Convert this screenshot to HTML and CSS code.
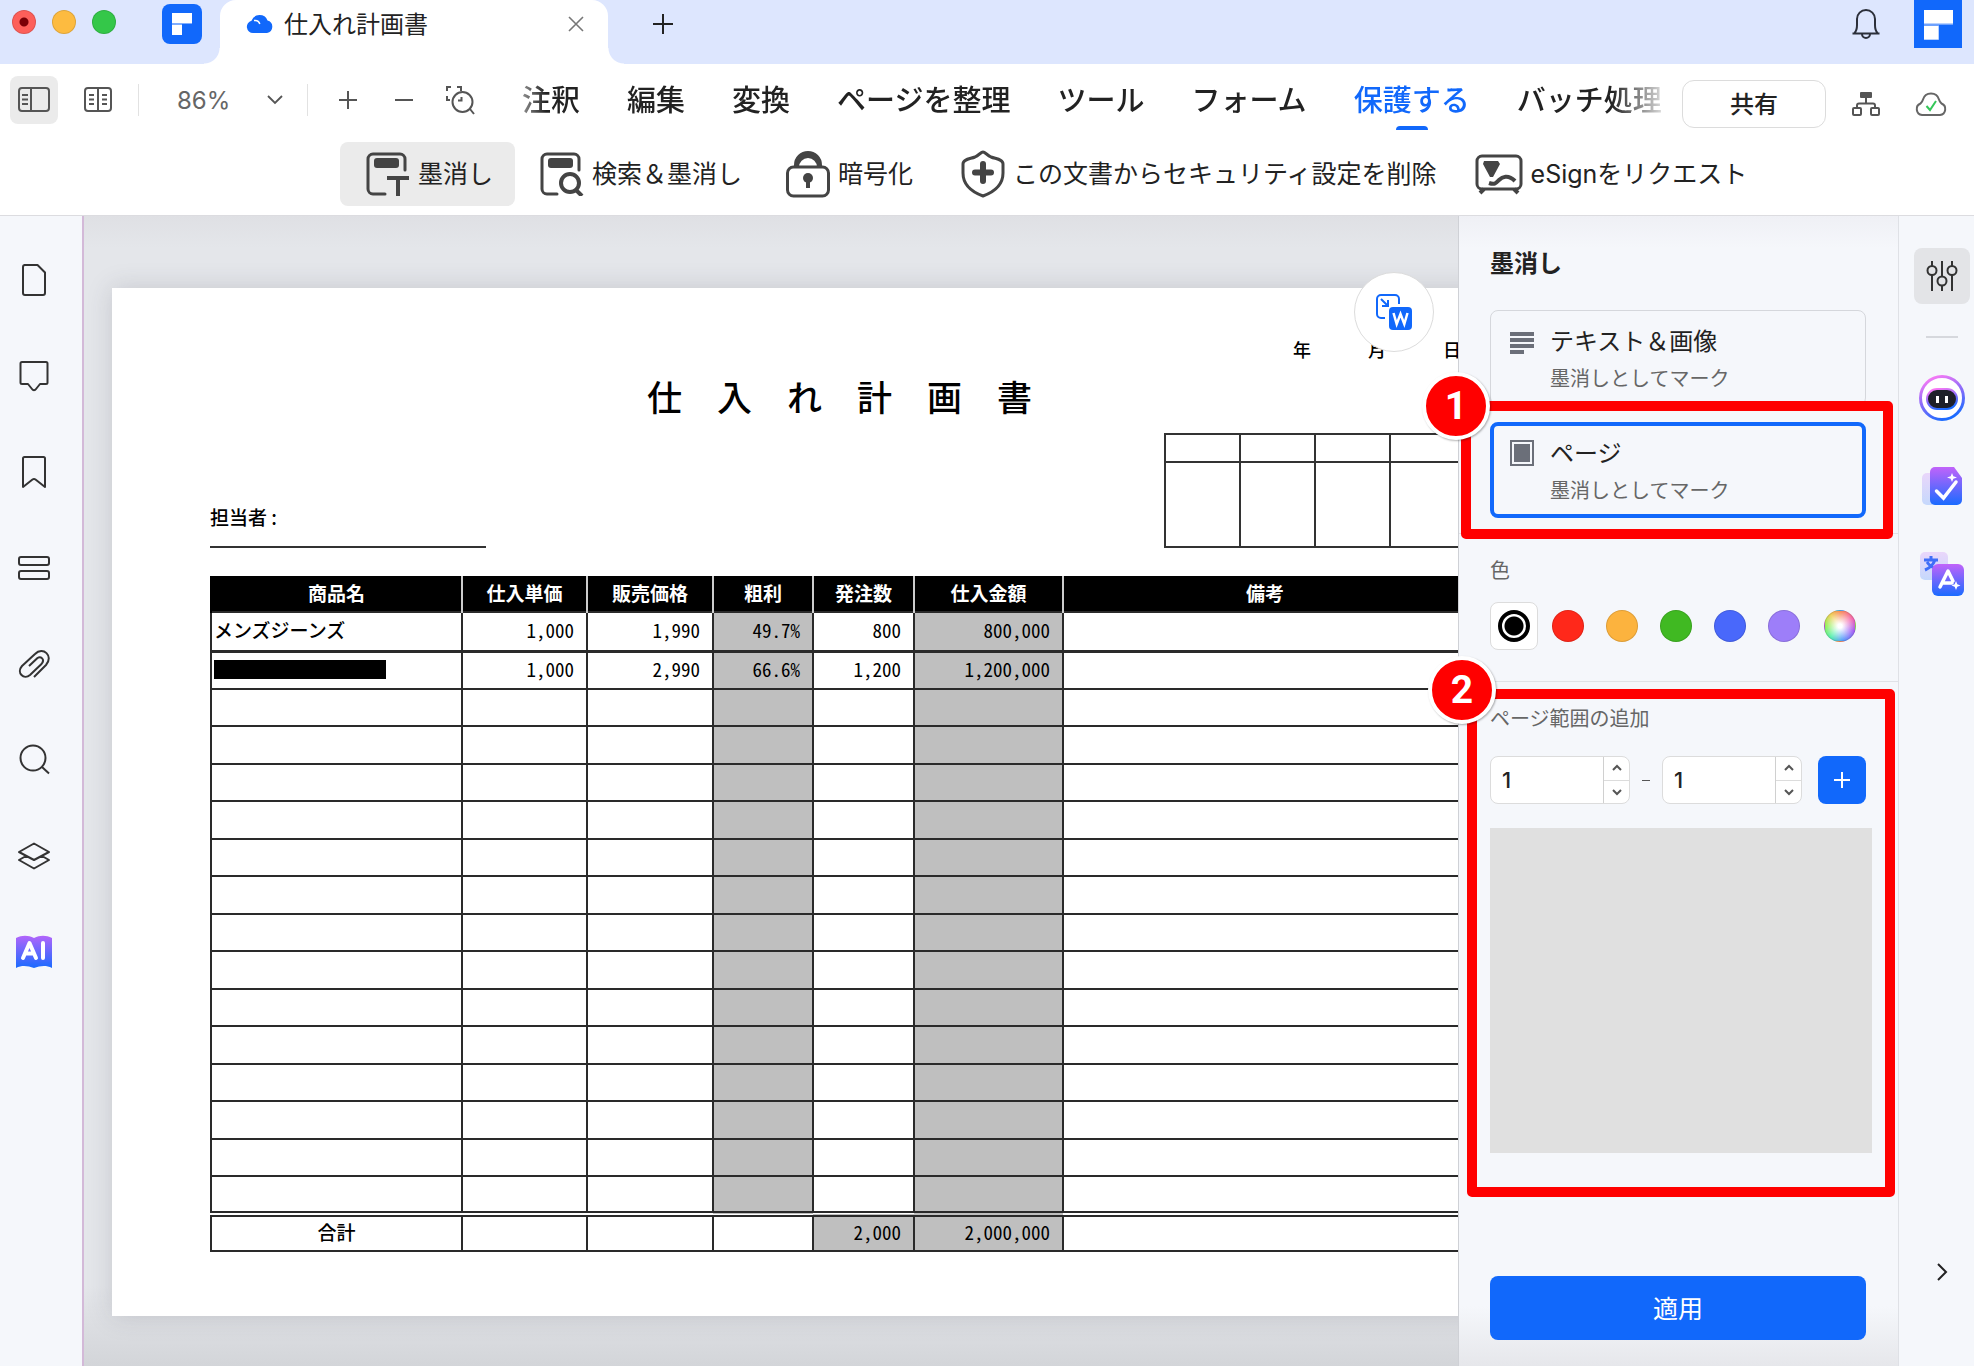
FILE: index.html
```html
<!DOCTYPE html>
<html lang="ja">
<head>
<meta charset="utf-8">
<title>仕入れ計画書</title>
<link rel="stylesheet" href="styles.css">
</head>
<body>
<div class="app">
  <header class="titlebar">
    <div class="lights">
      <button class="light light-close" aria-label="閉じる"></button>
      <button class="light light-min" aria-label="最小化"></button>
      <button class="light light-max" aria-label="最大化"></button>
    </div>
    <a class="home" href="#" aria-label="ホーム">
      <svg width="40" height="40" viewBox="0 0 40 40"><rect width="40" height="40" rx="8" fill="#1168fb"/><path d="M10 9h20v11H20v11H10z" fill="#7fadfd"/><path d="M10 9h20v10H10zM10 21h10v10H10z" fill="#fff"/></svg>
    </a>
    <div class="doc-tab">
      <svg width="28" height="20" viewBox="0 0 28 20"><path d="M7 19a6.200 6.200 0 0 1-1.500-12.200A8.500 8.500 0 0 1 21.500 6.500 6.400 6.400 0 0 1 21 19z" fill="#1168fb"/><path d="M8 6.500c3-.5 5 .8 5.800 3.500" fill="none" stroke="#fff" stroke-width="1.500"/></svg>
      <span class="doc-name">仕入れ計画書</span>
      <button class="icon-btn" aria-label="タブを閉じる"><svg width="16" height="16" viewBox="0 0 16 16" fill="none" stroke="#777" stroke-width="1.600"><path d="M1 1l14 14M15 1L1 15"/></svg></button>
    </div>
    <button class="icon-btn new-tab" aria-label="新しいタブ"><svg width="22" height="22" viewBox="0 0 22 22" fill="none" stroke="#222" stroke-width="2"><path d="M11 1v20M1 11h20"/></svg></button>
    <button class="icon-btn bell" aria-label="通知"><svg width="30" height="32" viewBox="0 0 30 32" fill="none" stroke="#2b2f3a" stroke-width="2"><path d="M1.500 26.500h27M3.500 26c2-2 2.500-5 2.500-8v-6a9 9 0 0 1 18 0v6c0 3 .5 6 2.500 8M11 27a4 4 0 0 0 8 0"/></svg></button>
    <a class="account" href="#" aria-label="アカウント"><svg width="48" height="48" viewBox="0 0 48 48"><rect width="48" height="48" fill="#1168fb"/><path d="M10 10h29v15H25v15H10z" fill="#6fa2fd"/><path d="M10 10h29v13.500H10zM10 26h14.500v13.500H10z" fill="#fff"/></svg></a>
  </header>

  <div class="toolbar">
    <button class="tool tool-on" aria-label="サイドバー"><svg width="32" height="26" viewBox="0 0 32 26" fill="none" stroke="#555" stroke-width="2"><rect x="1" y="1" width="30" height="23" rx="3"/><path d="M13 1v23M4 8h6M4 12.500h6M4 17h6"/></svg></button>
    <button class="tool" aria-label="見開き"><svg width="28" height="26" viewBox="0 0 28 26" fill="none" stroke="#555" stroke-width="2"><rect x="1" y="1" width="26" height="23" rx="3"/><path d="M14 1v23M5 8h5M5 12.500h5M5 17h5M18 8h5M18 12.500h5M18 17h5"/></svg></button>
    <span class="sep"></span>
    <div class="zoom">
      <select class="zoom-select" aria-label="ズーム"><option>86%</option><option>100%</option></select>
      <svg width="16" height="10" viewBox="0 0 16 10" fill="none" stroke="#555" stroke-width="1.800"><path d="M1 1l7 7 7-7"/></svg>
    </div>
    <span class="sep"></span>
    <button class="tool tool-plus" aria-label="拡大"><svg width="18" height="18" viewBox="0 0 18 18" stroke="#555" stroke-width="2"><path d="M9 0v18M0 9h18"/></svg></button>
    <button class="tool" aria-label="縮小"><svg width="18" height="18" viewBox="0 0 18 18" stroke="#555" stroke-width="2"><path d="M0 9h18"/></svg></button>
    <button class="tool" aria-label="範囲ズーム"><svg width="30" height="30" viewBox="0 0 30 30" fill="none" stroke="#555" stroke-width="2"><path d="M2 6V2h4M12 2h4v4M2 11v4h3"/><circle cx="17.500" cy="17" r="10"/><path d="M25 24l4 5M13 15.500h3.500V12"/></svg></button>
    <nav class="menu">
      <a href="#">注釈</a><a href="#">編集</a><a href="#">変換</a><a href="#">ページを整理</a><a href="#">ツール</a><a href="#">フォーム</a><a href="#" class="menu-on">保護する</a><a href="#">バッチ処理</a>
    </nav>
    <button class="share">共有</button>
    <button class="tool tool-tree" aria-label="構成"><svg width="30" height="26" viewBox="0 0 30 26" fill="none" stroke="#555" stroke-width="2"><rect x="9" y="1" width="12" height="6" rx="1" fill="#555" stroke="none"/><path d="M15 6v6M6 17v-2.500a2 2 0 0 1 2-2h14a2 2 0 0 1 2 2V17"/><rect x="2" y="17" width="8" height="7" rx="1"/><rect x="20" y="17" width="8" height="7" rx="1"/></svg></button>
    <button class="tool tool-cloud" aria-label="クラウド保存"><svg width="32" height="26" viewBox="0 0 32 26" fill="none" stroke="#666" stroke-width="2"><path d="M7 24a6 6 0 0 1-1.500-11.500c1-1 2-2 2.500-4a8.300 8.300 0 0 1 16 0c.5 2 1.500 3 2.500 4A6 6 0 0 1 25 24z"/><path d="M11.500 15l3.500 4 6-9" stroke="#34c759"/></svg></button>
  </div>

  <div class="ribbon">
    <button class="rib rib-on"><svg width="44" height="44" viewBox="0 0 44 44" fill="none" stroke="#444" stroke-width="3"><path d="M19 42H7a5 5 0 0 1-5-5V7a5 5 0 0 1 5-5h27a5 5 0 0 1 5 5v11" stroke-linecap="round"/><rect x="8" y="6" width="25" height="10" rx="3" fill="#444" stroke="none"/><path d="M21 26h22M32 26v18" stroke-width="4"/></svg>墨消し</button>
    <button class="rib"><svg width="44" height="44" viewBox="0 0 44 44" fill="none" stroke="#444" stroke-width="3"><path d="M17 42H7a5 5 0 0 1-5-5V7a5 5 0 0 1 5-5h27a5 5 0 0 1 5 5v11" stroke-linecap="round"/><rect x="8" y="6" width="25" height="10" rx="3" fill="#444" stroke="none"/><circle cx="30" cy="31" r="9" stroke-width="4"/><path d="M36 38l6 6" stroke-width="4"/></svg>検索＆墨消し</button>
    <button class="rib"><svg width="44" height="48" viewBox="0 0 44 48" fill="none" stroke="#444" stroke-width="3"><path d="M8 17v-2a14 14 0 0 1 28 0v2h-5a9 9 0 0 0-18 0z" fill="#444" stroke="none"/><rect x="1.500" y="17" width="41" height="29" rx="6"/><circle cx="22" cy="28" r="5" fill="#444" stroke="none"/><path d="M22 28v10" stroke-width="4"/></svg>暗号化</button>
    <button class="rib"><svg width="44" height="48" viewBox="0 0 44 48" fill="none" stroke="#444" stroke-width="3"><path d="M22 2c2 0 4 3 8 5 5 2 12 2 12 7v9c0 12-9 19-20 23C11 42 2 35 2 23v-9c0-5 7-5 12-7 4-2 6-5 8-5z"/><path d="M22 14v17M14 22.500h16" stroke-width="6" stroke-linecap="round"/></svg>この文書からセキュリティ設定を削除</button>
    <button class="rib"><svg width="48" height="42" viewBox="0 0 48 42" fill="none" stroke="#444" stroke-width="4"><rect x="2" y="3" width="44" height="33" rx="5" stroke-width="3"/><path d="M9 36l-4 4M39 36l4 4"/><path d="M9 8h14l2 3-7 13h-3L8 11z" fill="#444" stroke="none"/><path d="M14 30c6 2 7 0 10-3s9-6 16 1"/></svg>eSignをリクエスト</button>
  </div>

  <main class="work">
    <aside class="rail">
      <button class="rail-btn" aria-label="ページ"><svg width="36" height="36" viewBox="0 0 36 36"><path d="M8 3h13.500L29 10.500V31a2 2 0 0 1-2 2H9a2 2 0 0 1-2-2V5a2 2 0 0 1 2-2"/></svg></button>
      <button class="rail-btn" aria-label="コメント"><svg width="36" height="36" viewBox="0 0 36 36"><path d="M6 4h24a1.500 1.500 0 0 1 1.500 1.500v19A1.500 1.500 0 0 1 30 26h-6l-4 5c-1 1.500-3 1.500-4 0l-4-5H6a1.500 1.500 0 0 1-1.500-1.500v-19A1.500 1.500 0 0 1 6 4z"/></svg></button>
      <button class="rail-btn" aria-label="ブックマーク"><svg width="36" height="36" viewBox="0 0 36 36"><path d="M7 33V4.500A1.500 1.500 0 0 1 8.500 3h19A1.500 1.500 0 0 1 29 4.500V33l-9.500-7.500a2.500 2.500 0 0 0-3 0z"/></svg></button>
      <button class="rail-btn" aria-label="フィールド"><svg width="36" height="36" viewBox="0 0 36 36"><rect x="3" y="7" width="30" height="8" rx="2"/><rect x="3" y="21" width="30" height="8" rx="2"/></svg></button>
      <button class="rail-btn" aria-label="添付"><svg width="36" height="36" viewBox="0 0 36 36"><path d="M18 31L30 19c8-9-3-19-11-11L6 20c-6 7 2 14 8 9L25.500 18c4-5-1-8-4-6L13 20"/></svg></button>
      <button class="rail-btn" aria-label="検索"><svg width="36" height="36" viewBox="0 0 36 36"><circle cx="17" cy="16" r="12.500"/><path d="M26 25l7 6.500"/></svg></button>
      <button class="rail-btn" aria-label="レイヤー"><svg width="36" height="36" viewBox="0 0 36 36"><path d="M3 14l15-8.500L33 14l-15 8zM10 18l-7 4 15 8.500L33 22l-7-4"/></svg></button>
      <button class="rail-btn" aria-label="AI"><svg width="36" height="36" viewBox="0 0 36 36"><defs><linearGradient id="ai" x1="0" y1="0" x2="0" y2="1"><stop offset="0" stop-color="#b265fb"/><stop offset="1" stop-color="#1a6bff"/></linearGradient></defs><path d="M0 4c6-3 12-3 18 0 6-3 12-3 18 0v30c-6-3-12-2-18 0-6-2-12-3-18 0z" fill="url(#ai)" stroke="none"/><path d="M7 24L13.500 9 20 24M9.500 19.500h8M27 9v15" stroke="#fff" stroke-width="4" stroke-linecap="round" stroke-linejoin="round"/></svg></button>
    </aside>

    <section class="canvas">
      <article class="sheet">
        <p class="date"><span>年</span><span>月</span><span>日</span></p>
        <h1 class="sheet-title">仕　入　れ　計　画　書</h1>
        <div class="sheet-head">
          <p class="person">担当者 :</p>
          <table class="stamps" aria-label="押印欄"><tr><td></td><td></td><td></td><td></td></tr><tr><td></td><td></td><td></td><td></td></tr></table>
        </div>
        <table class="plan">
          <colgroup><col class="c-name"><col class="c-cost"><col class="c-price"><col class="c-rate"><col class="c-qty"><col class="c-sum"><col class="c-note"></colgroup>
          <thead><tr><th>商品名</th><th>仕入単価</th><th>販売価格</th><th>粗利</th><th>発注数</th><th>仕入金額</th><th>備考</th></tr></thead>
          <tbody>
            <tr class="r-first"><td class="name">メンズジーンズ</td><td>1,000</td><td>1,990</td><td class="g">49.7%</td><td>800</td><td class="g">800,000</td><td></td></tr>
            <tr><td class="name"><div class="redacted"></div></td><td>1,000</td><td>2,990</td><td class="g">66.6%</td><td>1,200</td><td class="g">1,200,000</td><td></td></tr>
            <tr><td></td><td></td><td></td><td class="g"></td><td></td><td class="g"></td><td></td></tr>
            <tr><td></td><td></td><td></td><td class="g"></td><td></td><td class="g"></td><td></td></tr>
            <tr><td></td><td></td><td></td><td class="g"></td><td></td><td class="g"></td><td></td></tr>
            <tr><td></td><td></td><td></td><td class="g"></td><td></td><td class="g"></td><td></td></tr>
            <tr><td></td><td></td><td></td><td class="g"></td><td></td><td class="g"></td><td></td></tr>
            <tr><td></td><td></td><td></td><td class="g"></td><td></td><td class="g"></td><td></td></tr>
            <tr><td></td><td></td><td></td><td class="g"></td><td></td><td class="g"></td><td></td></tr>
            <tr><td></td><td></td><td></td><td class="g"></td><td></td><td class="g"></td><td></td></tr>
            <tr><td></td><td></td><td></td><td class="g"></td><td></td><td class="g"></td><td></td></tr>
            <tr><td></td><td></td><td></td><td class="g"></td><td></td><td class="g"></td><td></td></tr>
            <tr><td></td><td></td><td></td><td class="g"></td><td></td><td class="g"></td><td></td></tr>
            <tr><td></td><td></td><td></td><td class="g"></td><td></td><td class="g"></td><td></td></tr>
            <tr><td></td><td></td><td></td><td class="g"></td><td></td><td class="g"></td><td></td></tr>
            <tr><td></td><td></td><td></td><td class="g"></td><td></td><td class="g"></td><td></td></tr>
          </tbody>
          <tfoot><tr><td class="total">合計</td><td></td><td></td><td></td><td class="g">2,000</td><td class="g">2,000,000</td><td></td></tr></tfoot>
        </table>
      </article>
      <button class="convert" aria-label="Wordに変換"><svg width="38" height="38" viewBox="0 0 38 38" fill="none" stroke="#1168fb" stroke-width="2"><path d="M10 25H6a4 4 0 0 1-4-4V6a4 4 0 0 1 4-4h14a4 4 0 0 1 4 4v5M6 6l7 7M13 7v6H7"/><rect x="14" y="14" width="23" height="23" rx="4" fill="#1168fb" stroke="none"/><path d="M18.500 20l3.200 11 3.800-10 3.800 10 3.200-11" stroke="#fff" stroke-width="2.500"/></svg></button>
    </section>

    <aside class="panel">
      <h2 class="panel-title">墨消し</h2>
      <div class="options">
        <button class="option">
          <svg width="24" height="24" viewBox="0 0 24 24" fill="#6b6f79"><path d="M0 1h24v4H0zM0 7h24v4H0zM0 13h24v4H0zM0 19h14v4H0z"/></svg>
          <span class="option-text"><span class="option-name">テキスト＆画像</span><span class="option-sub">墨消しとしてマーク</span></span>
        </button>
        <button class="option option-on">
          <svg width="24" height="26" viewBox="0 0 24 26" fill="#6b6f79"><rect x="1" y="1" width="22" height="24" fill="none" stroke="#6b6f79" stroke-width="2"/><rect x="4" y="4" width="16" height="18"/></svg>
          <span class="option-text"><span class="option-name">ページ</span><span class="option-sub">墨消しとしてマーク</span></span>
        </button>
      </div>
      <fieldset class="block colors">
        <legend class="block-label">色</legend>
        <div class="swatches">
          <label class="swatch"><input type="radio" name="color" class="dot black" aria-label="黒" checked></label>
          <label class="swatch"><input type="radio" name="color" class="dot red" aria-label="赤"></label>
          <label class="swatch"><input type="radio" name="color" class="dot orange" aria-label="橙"></label>
          <label class="swatch"><input type="radio" name="color" class="dot green" aria-label="緑"></label>
          <label class="swatch"><input type="radio" name="color" class="dot blue" aria-label="青"></label>
          <label class="swatch"><input type="radio" name="color" class="dot purple" aria-label="紫"></label>
          <label class="swatch"><input type="radio" name="color" class="dot wheel" aria-label="その他"></label>
        </div>
      </fieldset>
      <div class="block">
        <label class="block-label" for="from">ページ範囲の追加</label>
        <div class="range">
          <div class="stepper"><input class="step-input" id="from" type="number" value="1"><div class="step-btns"><button class="step" aria-label="増やす"><svg width="12" height="8" viewBox="0 0 12 8"><path d="M2 6l4-4 4 4"/></svg></button><button class="step" aria-label="減らす"><svg width="12" height="8" viewBox="0 0 12 8"><path d="M2 2l4 4 4-4"/></svg></button></div></div>
          <span class="dash"></span>
          <div class="stepper"><input class="step-input" type="number" value="1" aria-label="終了ページ"><div class="step-btns"><button class="step" aria-label="増やす"><svg width="12" height="8" viewBox="0 0 12 8"><path d="M2 6l4-4 4 4"/></svg></button><button class="step" aria-label="減らす"><svg width="12" height="8" viewBox="0 0 12 8"><path d="M2 2l4 4 4-4"/></svg></button></div></div>
          <button class="add" aria-label="追加"><svg width="16" height="16" viewBox="0 0 16 16" stroke="#fff" stroke-width="2"><path d="M8 0v16M0 8h16"/></svg></button>
        </div>
        <div class="range-list"></div>
      </div>
      <button class="apply">適用</button>
      <div class="mark mark-1"></div>
      <div class="mark mark-2"></div>
      <span class="num num-1">1</span>
      <span class="num num-2">2</span>
    </aside>

    <aside class="dock">
      <button class="dock-btn dock-on" aria-label="プロパティ"><svg width="32" height="32" viewBox="0 0 32 32" fill="none" stroke="#333" stroke-width="2"><path d="M6 1v5M6 15v16M16 1v15M16 26v5M26 1v5M26 15v16"/><circle cx="6" cy="10.500" r="4.500"/><circle cx="16" cy="21" r="4.500"/><circle cx="26" cy="10.500" r="4.500"/></svg></button>
      <span class="dock-sep"></span>
      <button class="dock-btn" aria-label="AIアシスタント"><svg width="46" height="46" viewBox="0 0 46 46"><defs><linearGradient id="g1" x1=".2" y1="0" x2=".6" y2="1"><stop offset="0" stop-color="#ff7bf5"/><stop offset=".5" stop-color="#8a6cf9"/><stop offset="1" stop-color="#1a6bff"/></linearGradient></defs><circle cx="23" cy="23" r="21.500" fill="#fff" stroke="url(#g1)" stroke-width="3"/><rect x="8" y="14" width="30" height="20" rx="10" fill="#1e2029" stroke="url(#g1)" stroke-width="2"/><path d="M18.500 21v7M27.500 21v7" stroke="#fff" stroke-width="3"/></svg></button>
      <button class="dock-btn" aria-label="AIチェック"><svg width="42" height="40" viewBox="0 0 42 40"><defs><linearGradient id="g2" x1="0" y1="0" x2="0" y2="1"><stop offset="0" stop-color="#c163fa"/><stop offset="1" stop-color="#1a6bff"/></linearGradient></defs><rect x="1" y="7" width="32" height="32" rx="5" fill="url(#g2)" opacity=".22"/><path d="M14 1h19l8 11v22a5 5 0 0 1-5 5H14a5 5 0 0 1-5-5V6a5 5 0 0 1 5-5z" fill="url(#g2)"/><path d="M15.500 25l7 7L35 16" fill="none" stroke="#fff" stroke-width="3.500" stroke-linecap="round"/><path d="M31 7l1.300 3.200L36 11.500l-3.700 1.300L31 16l-1.300-3.200L26 11.500l3.700-1.300z" fill="#fff"/></svg></button>
      <button class="dock-btn" aria-label="AI翻訳"><svg width="44" height="44" viewBox="0 0 44 44"><rect width="28" height="28" rx="5" fill="url(#g2)" opacity=".22"/><path d="M11 4v3M4 8h14M15 8c-2 5-5 8-10 10M7 10c2 3 4 5 8 6" fill="none" stroke="#3f6ef8" stroke-width="3"/><rect x="12" y="12" width="32" height="32" rx="6" fill="url(#g2)"/><path d="M20 35l8-16 5 10M22 31h10" fill="none" stroke="#fff" stroke-width="3.500" stroke-linecap="round" stroke-linejoin="round"/><path d="M36 29l1.300 3.200 3.200 1.300-3.200 1.300L36 38l-1.300-3.200-3.200-1.300 3.200-1.300z" fill="#fff"/></svg></button>
      <button class="icon-btn collapse" aria-label="折りたたむ"><svg width="12" height="18" viewBox="0 0 12 18" fill="none" stroke="#222" stroke-width="2"><path d="M2 1l8 8-8 8"/></svg></button>
    </aside>
  </main>
</div>
</body>
</html>
```
FILE: styles.css
```css
* { box-sizing: border-box; }
body {
  margin: 0;
  font-family: Inter, "Noto Sans CJK JP", sans-serif;
  color: #222;
  background: #fff;
}
button, input, select { font: inherit; color: inherit; margin: 0; }
button { border: 0; padding: 0; background: none; }
a { color: inherit; text-decoration: none; }
h1, h2, p { margin: 0; }
svg { flex: none; display: block; }

.app { display: flex; flex-direction: column; min-height: 100vh; overflow: hidden; }
.icon-btn { display: flex; align-items: center; justify-content: center; }

/* Title bar */
.titlebar { display: flex; align-items: flex-start; height: 64px; background: #dde6fe; padding-right: 12px; }
.lights { display: flex; gap: 16px; padding: 10px 0 0 12px; }
.light { width: 24px; height: 24px; border-radius: 50%; border: 1px solid rgba(0, 0, 0, .12); }
.light-close { background: radial-gradient(circle, #7a0006 0 4px, #fd5f5a 5px); }
.light-min { background: #fdbb40; }
.light-max { background: #34c749; }
.home { margin: 4px 0 0 46px; }
.doc-tab {
  position: relative;
  display: flex;
  align-items: center;
  width: 388px;
  height: 64px;
  margin-left: 18px;
  padding: 0 24px 16px 26px;
  border-radius: 16px 16px 0 0;
  background: #fff;
}
.doc-tab::before, .doc-tab::after { content: ""; position: absolute; bottom: 0; width: 16px; height: 16px; }
.doc-tab::before { right: 100%; background: radial-gradient(circle at 0 0, #dde6fe 15px, #fff 16px); }
.doc-tab::after { left: 100%; background: radial-gradient(circle at 100% 0, #dde6fe 15px, #fff 16px); }
.doc-name { flex: 1; margin-left: 10px; padding-top: 2px; font-size: 24px; line-height: 32px; }
.new-tab { margin: 13px 0 0 44px; }
.bell { margin: 7px 33px 0 auto; }

/* Toolbar */
.toolbar { display: flex; align-items: center; height: 72px; padding-left: 10px; color: #222; }
.tool { display: flex; align-items: center; justify-content: center; width: 48px; height: 48px; border-radius: 8px; }
.tool-on { background: #ebebeb; }
.tool-on + .tool { margin-left: 16px; }
.sep { width: 1px; height: 32px; margin-left: 16px; background: #e2e2e2; }
.zoom { display: flex; align-items: center; width: 152px; padding-left: 38px; }
.zoom-select { width: 90px; border: 0; padding: 2px 0 0; appearance: none; background: none; font-size: 24px; line-height: 32px; color: #666; }
.tool-plus { margin-left: 16px; margin-right: 8px; }
.tool-plus + .tool { margin-right: 8px; }
.menu {
  display: flex;
  flex: 1;
  gap: 47px;
  min-width: 0;
  margin: 0 10px 0 38px;
  overflow: hidden;
  font-size: 29px;
  font-weight: 500;
  line-height: 40px;
  white-space: nowrap;
  mask-image: linear-gradient(to right, rgba(0, 0, 0, .5), #000 24px, #000 calc(100% - 60px), transparent);
}
.menu a { display: flex; flex-direction: column; align-items: center; padding: 17px 0 15px; }
.menu .menu-on { padding-bottom: 0; color: #1168fb; }
.menu-on::after { content: ""; width: 32px; height: 4px; margin-top: 5px; border-radius: 4px 4px 0 0; background: #1168fb; }
.share { width: 144px; height: 48px; margin-top: 8px; padding-bottom: 3px; border: 1px solid #dcdcdc; border-radius: 12px; font-size: 24px; font-weight: 500; }
.tool-tree { margin: 8px 0 0 16px; }
.tool-cloud { margin: 8px 19px 0 17px; }

/* Ribbon */
.ribbon { display: flex; align-items: center; height: 80px; padding: 0 0 4px 340px; border-bottom: 1px solid #dcdce0; }
.rib { display: flex; align-items: center; gap: 8px; height: 64px; border-radius: 8px; font-size: 25px; line-height: 32px; white-space: nowrap; }
.rib-on { margin-right: 25px; padding: 0 22px 0 26px; background: #ebebeb; }
.rib:nth-child(2) { padding-right: 44px; }
.rib:nth-child(3) { padding-right: 48px; }
.rib:nth-child(4) { padding-right: 38px; }

/* Work area */
.work { display: flex; flex: 1; background: #f5f7fb; }
.rail { display: flex; flex-direction: column; flex: none; width: 84px; padding: 16px 14px 0 0; border-right: 2px solid #d3b9d8; }
.rail-btn { display: flex; align-items: center; justify-content: center; height: 96px; }
.rail-btn svg { fill: none; stroke: #333; stroke-width: 2; stroke-linejoin: round; }

.canvas {
  position: relative;
  flex: 1;
  min-width: 0;
  overflow: hidden;
  padding: 72px 0 50px 28px;
  background: linear-gradient(#dfe0e4, #e4e6ea 32px, #e4e6ea calc(100% - 80px), #d3d5d9);
}
.sheet {
  width: 1436px;
  height: 1028px;
  padding: 47px 0 0 98px;
  background: #fff;
  box-shadow: 0 0 24px rgba(60, 60, 80, .18);
  font-family: "Noto Sans CJK JP", sans-serif;
  font-size: 19px;
  font-weight: 500;
  color: #000;
}
.date { display: flex; gap: 57px; padding-left: 1083px; font-size: 18px; line-height: 28px; }
.sheet-title { padding-left: 437px; margin-top: 9px; font-size: 35px; font-weight: 500; line-height: 48px; }
.sheet-head { display: flex; align-items: flex-end; justify-content: space-between; width: 1256px; margin-top: 13px; }
.person { width: 276px; padding-bottom: 15px; border-bottom: 2px solid #333; line-height: 28px; }
.stamps { width: 302px; border-collapse: collapse; }
.stamps td { width: 75px; height: 85px; padding: 0; border: 2px solid #333; }
.stamps tr:first-child td { height: 28px; }

.plan { width: 1257px; margin-top: 28px; border-collapse: collapse; table-layout: fixed; font-feature-settings: "hwid"; }
.c-name { width: 251px; }
.c-cost { width: 125px; }
.c-price { width: 126px; }
.c-rate { width: 100px; }
.c-qty { width: 101px; }
.c-sum { width: 149px; }
.plan th { height: 36px; padding: 0 0 2px; border-left: 2px solid #ccc; background: #000; color: #fff; font-weight: 700; line-height: 26px; }
.plan th:first-child { border-left-color: #000; }
.plan td { height: 37px; padding: 0 12px 2px; border: 2px solid #2a2a2a; text-align: right; font-weight: 400; line-height: 26px; }
.plan tbody tr:nth-child(even) td { height: 38px; }
.plan .r-first td { height: 39px; border-bottom-width: 3px; }
.plan .name { padding: 0 2px 2px; text-align: left; font-weight: 500; }
.plan .g { background: #bfbfbf; }
.plan tfoot td { height: 37px; border-top: 6px double #2a2a2a; padding-bottom: 4px; }
.plan .total { text-align: center; font-weight: 500; }
.redacted { width: 172px; height: 19px; background: #000; }

.convert {
  position: absolute;
  top: 56px;
  right: 24px;
  display: flex;
  align-items: center;
  justify-content: center;
  width: 80px;
  height: 80px;
  border: 1px solid #dcdcdc;
  border-radius: 50%;
  background: #fff;
}

/* Redaction panel */
.panel {
  position: relative;
  display: flex;
  flex-direction: column;
  flex: none;
  width: 440px;
  padding-bottom: 26px;
  border-left: 1px solid #cfd1d6;
  background: linear-gradient(#eff0f5, #f5f7fb 32px, #f5f7fb calc(100% - 60px), #e6e7eb);
}
.panel-title { padding: 32px 31px 0; font-size: 24px; font-weight: 600; line-height: 32px; }
.options { display: flex; flex-direction: column; gap: 16px; padding: 30px 32px 15px 31px; }
.option { display: flex; gap: 16px; height: 96px; padding: 17px 19px; border: 1px solid #d5d7dc; border-radius: 8px; text-align: left; }
.option svg { margin-top: 3px; }
.option-on { padding: 14px 16px; border: 4px solid #1168fb; }
.option-on svg { margin-top: 0; }
.option-text { display: flex; flex-direction: column; gap: 11px; }
.option-name { font-size: 24px; line-height: 28px; }
.option-sub { font-size: 20px; line-height: 24px; color: #666; }
.block { min-width: 0; margin: 0; padding: 25px 26px 0 31px; border: 0; border-top: 1px solid #e0e2e7; }
.block-label { display: block; float: left; width: 100%; padding: 0; font-size: 20px; line-height: 24px; color: #666; }
.colors { padding-bottom: 31px; }
.swatches { display: flex; gap: 6px; clear: both; padding-top: 19px; }
.swatch { display: flex; align-items: center; justify-content: center; width: 48px; height: 48px; border-radius: 8px; }
.swatch:has(:checked) { border: 1px solid #dcdcdc; background: #fff; }
.swatch:last-child { margin-left: 2px; }
.dot { appearance: none; width: 32px; height: 32px; border: 1px solid rgba(0, 0, 0, .12); border-radius: 50%; }
.black { border: 4px solid #000; background: radial-gradient(circle, #000 9px, #fff 10px); }
.red { background: #ff281a; }
.orange { background: #fcb33e; }
.green { background: #40b922; }
.blue { background: #4968fb; }
.purple { background: #9d7ef9; }
.wheel { background: radial-gradient(circle, #fff 10%, transparent 68%), conic-gradient(#f9905a, #f46ab0 60deg, #a560f4 110deg, #5aa0fb 170deg, #5af0b0 220deg, #94f05a 270deg, #f0d05a 320deg, #f9905a); }
.range { display: flex; align-items: center; clear: both; padding: 25px 6px 24px 0; }
.stepper { display: flex; width: 140px; height: 48px; border: 1px solid #dcdcdc; border-radius: 8px; background: #fff; overflow: hidden; }
.step-input { flex: 1; min-width: 0; padding: 0 0 0 11px; border: 0; background: none; font-size: 22px; font-weight: 500; appearance: textfield; }
.step-input::-webkit-inner-spin-button { appearance: none; }
.step-btns { display: flex; flex-direction: column; width: 26px; border-left: 1px solid #d0d0d0; }
.step { display: flex; flex: 1; align-items: center; justify-content: center; }
.step + .step { border-top: 1px solid #dcdcdc; }
.step svg { fill: none; stroke: #555; stroke-width: 2; }
.dash { width: 8px; height: 1px; margin: 0 12px; background: #555; }
.add { display: flex; align-items: center; justify-content: center; width: 48px; height: 48px; margin-left: auto; border-radius: 8px; background: #1168fb; }
.range-list { height: 325px; background: #e0e0e0; }
.apply { height: 64px; margin: auto 32px 0 31px; padding-bottom: 3px; border-radius: 8px; background: #1168fb; color: #fff; font-size: 25px; }

/* Callouts drawn over the panel */
.mark { position: absolute; border: 10px solid #f00; border-radius: 5px; pointer-events: none; }
.mark-1 { top: 185px; left: 2px; width: 432px; height: 138px; }
.mark-2 { top: 473px; left: 8px; width: 428px; height: 508px; }
.num {
  position: absolute;
  display: flex;
  align-items: center;
  justify-content: center;
  width: 68px;
  height: 68px;
  border: 4px solid #fff;
  border-radius: 50%;
  background: #f00;
  box-shadow: 1px 1px 2px rgba(0, 0, 0, .3);
  color: #fff;
  font-family: Roboto, sans-serif;
  font-size: 39px;
  font-weight: 700;
}
.num-1 { top: 156px; left: -37px; }
.num-2 { top: 440px; left: -31px; }

/* Right dock */
.dock { display: flex; flex-direction: column; align-items: center; flex: none; width: 76px; padding: 32px 0 84px 11px; border-left: 1px solid #dfe1e6; }
.dock-btn { display: flex; align-items: center; justify-content: center; width: 56px; height: 56px; border-radius: 8px; }
.dock-on { background: #e3e4e7; }
.dock-sep { width: 32px; height: 2px; margin: 32px 0; background: #d6d8dd; }
.dock-btn + .dock-btn { margin-top: 32px; }
.collapse { height: 20px; margin-top: auto; }
```
